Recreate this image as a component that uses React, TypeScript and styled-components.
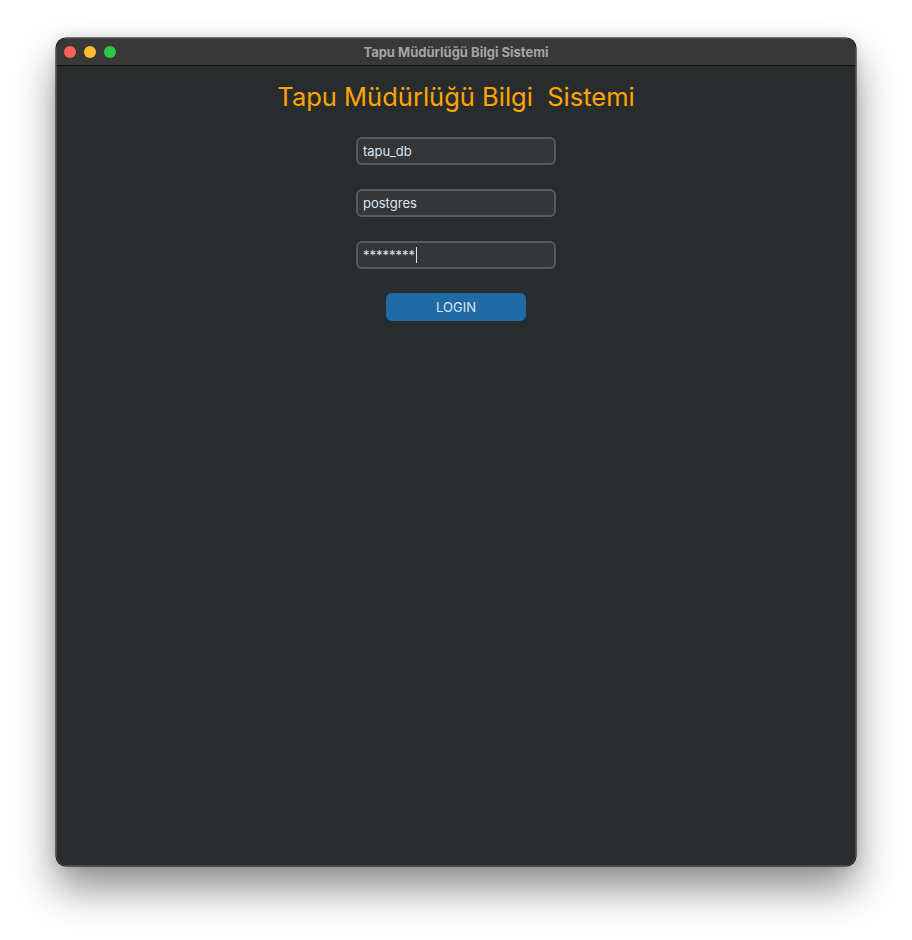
import React from "react";
import styled, { createGlobalStyle } from "styled-components";

const Global = createGlobalStyle`
  html, body { margin: 0; padding: 0; background: #ffffff; }
  body { font-family: "Inter", "Liberation Sans", sans-serif; }
`;

const Page = styled.div`
  width: 912px;
  height: 940px;
  padding: 38px 0 0 56px;
  box-sizing: border-box;
`;

const Window = styled.div`
  width: 800px;
  height: 828px;
  box-sizing: border-box;
  background: #292c2d;
  border: 1px solid #4a4a4a;
  border-radius: 10px;
  overflow: hidden;
  display: flex;
  flex-direction: column;
  box-shadow: 0 0 0 0.5px #000, 0 22px 40px rgba(0, 0, 0, 0.45), 0 0 12px rgba(0, 0, 0, 0.12);
`;

const TitleBar = styled.div`
  height: 27px;
  box-sizing: border-box;
  flex-shrink: 0;
  background: #383838;
  border-bottom: 1px solid #111;
  display: flex;
  align-items: center;
  position: relative;
  padding-left: 7px;
  gap: 8px;
`;

const Light = styled.span<{ $c: string }>`
  width: 12px;
  height: 12px;
  border-radius: 50%;
  background: ${(p) => p.$c};
`;

const Title = styled.div`
  position: absolute;
  left: 0;
  right: 0;
  text-align: center;
  color: #a3a3a3;
  font-weight: 700;
  font-size: 13px;
  pointer-events: none;
`;

const Content = styled.div`
  flex: 1;
  display: flex;
  flex-direction: column;
  align-items: center;
  padding-top: 15px;
`;

const Heading = styled.h1`
  margin: 0 0 24px 0;
  font-weight: 400;
  font-size: 25.5px;
  line-height: 32px;
  color: #ffa500;
  white-space: pre;
`;

const Field = styled.div`
  width: 200px;
  height: 28px;
  box-sizing: border-box;
  border: 2px solid #565b5e;
  border-radius: 6px;
  background: #343638;
  color: #dce4ee;
  font-size: 13px;
  display: flex;
  align-items: center;
  padding-left: 5px;
  margin-bottom: 24px;
`;

const Caret = styled.span`
  display: inline-block;
  width: 1px;
  height: 16px;
  background: #dce4ee;
  margin-left: 1px;
`;

const Button = styled.button`
  width: 140px;
  height: 28px;
  border: none;
  border-radius: 6px;
  background: #1f6aa5;
  color: #dce4ee;
  font-family: inherit;
  font-size: 13px;
  margin-top: 0;
`;

export default function App() {
  return (
    <>
      <Global />
      <Page>
        <Window>
          <TitleBar>
            <Light $c="#fe5f57" />
            <Light $c="#febc2e" />
            <Light $c="#28c840" />
            <Title>Tapu Müdürlüğü Bilgi Sistemi</Title>
          </TitleBar>
          <Content>
            <Heading>{"Tapu Müdürlüğü Bilgi  Sistemi"}</Heading>
            <Field>tapu_db</Field>
            <Field>postgres</Field>
            <Field>
              ********
              <Caret />
            </Field>
            <Button>LOGIN</Button>
          </Content>
        </Window>
      </Page>
    </>
  );
}
